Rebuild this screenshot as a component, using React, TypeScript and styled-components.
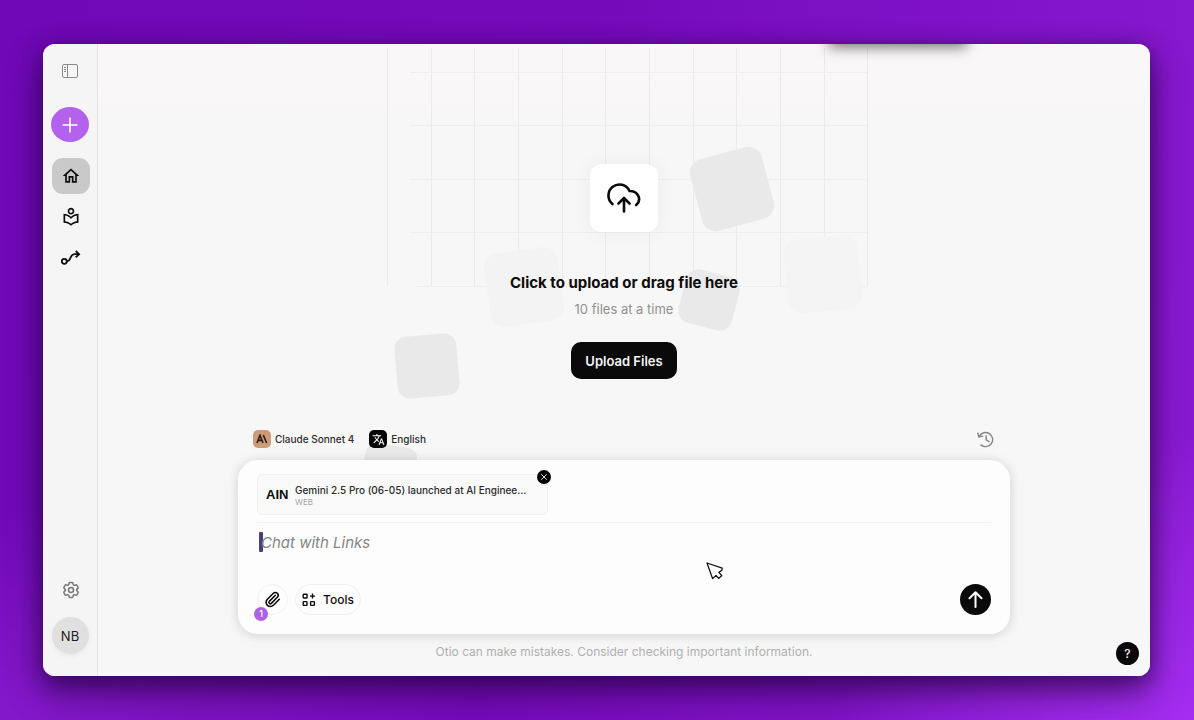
import React from "react";
import styled, { createGlobalStyle } from "styled-components";
import { Paperclip, X } from "lucide-react";
import { MdOutlineHome, MdOutlineLocalLibrary, MdTranslate } from "react-icons/md";
import { HiOutlineCog6Tooth } from "react-icons/hi2";

const GlobalStyle = createGlobalStyle`
  *, *::before, *::after { box-sizing: border-box; }
  body { margin: 0; font-family: Inter, "Liberation Sans", sans-serif; color: #0c0c0c; }
  button, input { font: inherit; color: inherit; }
  button { cursor: pointer; border: 0; padding: 0; background: none; }
  svg { display: block; flex: none; }
`;

const Desktop = styled.div`
  min-height: 100vh;
  display: flex;
  padding: 44px 44px 44px 43px;
  background:
    radial-gradient(ellipse 30% 40% at 100% 100%, #a42df0 0%, rgba(150, 35, 225, 0) 100%),
    radial-gradient(ellipse 40% 30% at 0% 100%, #8419cb 0%, rgba(120, 20, 190, 0) 100%),
    linear-gradient(100deg, #6f08b6 0%, #750abb 45%, #8a1bd2 100%);
`;

const Window = styled.div`
  flex: 1;
  display: flex;
  min-width: 0;
  overflow: hidden;
  border-radius: 12px;
  background: #f7f7f7;
`;

const WindowShadow = styled.div`
  flex: 1;
  display: flex;
  min-width: 0;
  border-radius: 12px;
  box-shadow: 0 16px 32px rgba(30, 0, 50, 0.62), 0 2px 20px rgba(40, 0, 80, 0.45);
`;

const Sidebar = styled.nav`
  flex: none;
  width: 55px;
  display: flex;
  flex-direction: column;
  align-items: center;
  padding: 17px 0 22px;
  background: #f5f5f5;
  border-right: 1px solid #e4e4e4;
`;

const SideButton = styled.button<{ $active?: boolean }>`
  width: 38px;
  height: 36px;
  margin: 0 0 5px 2px;
  display: grid;
  place-items: center;
  border-radius: 11px;
  background: ${(p) => (p.$active ? "#c9c9c9" : "transparent")};
`;

const PanelToggle = styled.button`
  width: 38px;
  height: 20px;
  display: grid;
  place-items: center;
  color: #8b8b8b;
`;

const NewButton = styled.button`
  width: 38px;
  height: 35px;
  margin: 26px 0 16px;
  display: grid;
  place-items: center;
  border-radius: 50%;
  background: #b362ee;
  color: #fff;
`;

const SidebarFoot = styled.div`
  margin-top: auto;
  display: flex;
  flex-direction: column;
  align-items: center;
  gap: 4px;
  color: #777;
`;

const Avatar = styled.button`
  width: 37px;
  height: 37px;
  border-radius: 50%;
  background: #e0e0e0;
  color: #1c1c1c;
  font-size: 13px;
  box-shadow: 0 2px 6px rgba(0, 0, 0, 0.05);
`;

const Main = styled.main`
  position: relative;
  isolation: isolate;
  flex: 1;
  min-width: 0;
  display: flex;
  flex-direction: column;
  align-items: center;
  padding: 0 16px 15px;
  background: linear-gradient(#faf7f8 0, #f7f7f7 120px);
`;

const Backdrop = styled.svg`
  position: absolute;
  z-index: -1;
  top: 0;
  left: 50%;
  width: 780px;
  height: 430px;
  transform: translateX(-50%);
  overflow: visible;
`;

const Dropzone = styled.section`
  display: flex;
  flex-direction: column;
  align-items: center;
  padding-top: 120px;
`;

const UploadTile = styled.div`
  width: 68px;
  height: 68px;
  display: grid;
  place-items: center;
  border-radius: 12px;
  background: #fff;
  box-shadow: 0 0 16px 4px rgba(0, 0, 0, 0.035);
`;

const DropTitle = styled.h1`
  margin: 40px 0 0;
  font-size: 15px;
  line-height: 22px;
  font-weight: 700;
`;

const DropHint = styled.p`
  margin: 5px 0 0;
  font-size: 13px;
  line-height: 20px;
  color: #909090;
`;

const UploadButton = styled.button`
  height: 37px;
  margin-top: 23px;
  padding: 0 14px;
  border-radius: 10px;
  background: #0a0a0a;
  color: #f5f5f5;
  font-size: 13px;
  font-weight: 600;
`;

const Composer = styled.section`
  width: 100%;
  max-width: 772px;
  margin-top: auto;
`;

const Options = styled.div`
  display: flex;
  align-items: center;
  gap: 15px;
  padding: 0 16px 12px 15px;
`;

const Option = styled.button`
  display: flex;
  align-items: center;
  gap: 4px;
  font-size: 10px;
  line-height: 18px;
  font-weight: 500;
  color: #2c2c2c;
`;

const OptionBadge = styled.span<{ $tone: string; $ink: string }>`
  width: 18px;
  height: 18px;
  display: grid;
  place-items: center;
  border-radius: 5px;
  background: ${(p) => p.$tone};
  color: ${(p) => p.$ink};
`;

const HistoryButton = styled.button`
  margin-left: auto;
  color: #858585;
`;

const Card = styled.form`
  display: flex;
  flex-direction: column;
  padding: 14px 19px 19px;
  border-radius: 20px;
  background: #fdfdfd;
  box-shadow: 0 1px 8px 2px rgba(0, 0, 0, 0.09), 0 2px 20px rgba(0, 0, 0, 0.04);
`;

const Attachments = styled.div`
  display: flex;
  padding-bottom: 7px;
  border-bottom: 1px solid #f2f2f2;
`;

const LinkChip = styled.div`
  position: relative;
  width: 291px;
  height: 41px;
  display: flex;
  align-items: center;
  gap: 6px;
  padding: 0 20px 0 8px;
  border: 1px solid #f0f0f0;
  border-radius: 5px;
  background: #f9f9f9;
`;

const SiteMark = styled.span`
  width: 23px;
  font-family: "Liberation Sans", sans-serif;
  font-size: 13px;
  font-weight: 700;
`;

const LinkText = styled.div`
  flex: 1;
  min-width: 0;
`;

const LinkTitle = styled.div`
  font-size: 10px;
  line-height: 14px;
  font-weight: 500;
  color: #2c2c2c;
  white-space: nowrap;
`;

const LinkKind = styled.div`
  font-size: 8px;
  line-height: 10px;
  color: #a5a5a5;
`;

const RemoveButton = styled.button`
  position: absolute;
  top: -5px;
  right: -4px;
  width: 14px;
  height: 14px;
  display: grid;
  place-items: center;
  border-radius: 50%;
  background: #050505;
  color: #fff;
`;

const PromptRow = styled.div`
  display: flex;
  align-items: center;
  padding: 8px 0 0 2px;
`;

const Caret = styled.span`
  flex: none;
  width: 4px;
  height: 20px;
  margin-right: -2px;
  border-radius: 1px;
  background: #4c3f74;
`;

const Prompt = styled.input`
  flex: 1;
  min-width: 0;
  height: 22px;
  padding: 0;
  border: 0;
  outline: 0;
  background: transparent;
  font-size: 15px;
  &::placeholder { color: #868686; opacity: 1; font-style: italic; }
`;

const Actions = styled.div`
  display: flex;
  align-items: center;
  gap: 7px;
  margin-top: 31px;
`;

const PillButton = styled.button<{ $round?: boolean }>`
  position: relative;
  width: ${(p) => (p.$round ? "31px" : "auto")};
  height: 31px;
  display: flex;
  align-items: center;
  justify-content: center;
  gap: 7px;
  padding: ${(p) => (p.$round ? "0" : "0 6px")};
  border: 1px solid #f0f0f0;
  border-radius: 16px;
  background: #fdfdfd;
  font-size: 12px;
  font-weight: 500;
`;

const Count = styled.span`
  position: absolute;
  left: -4px;
  bottom: -7px;
  width: 14px;
  height: 14px;
  border-radius: 50%;
  background: #ad62e6;
  color: #fff;
  font-size: 9px;
  line-height: 14px;
  text-align: center;
`;

const SendButton = styled.button`
  width: 31px;
  height: 31px;
  margin-left: auto;
  display: grid;
  place-items: center;
  border-radius: 50%;
  background: #0a0a0a;
  color: #fff;
`;

const Disclaimer = styled.p`
  margin: 9px 0 0;
  font-size: 12px;
  line-height: 18px;
  color: #b0b0b0;
  text-align: center;
`;

const HelpButton = styled.button`
  position: absolute;
  right: 11px;
  bottom: 11px;
  width: 23px;
  height: 23px;
  border-radius: 50%;
  background: #080808;
  color: #f2f2f2;
  font-size: 12px;
  font-weight: 500;
`;

const Pointer = styled.svg`
  position: absolute;
  left: 608px;
  top: 518px;
`;

const TopShadow = styled.div`
  position: absolute;
  top: -20px;
  left: 734px;
  width: 132px;
  height: 20px;
  box-shadow: 0 0 14px 3px rgba(0, 0, 0, 0.55);
`;

const columns = [0, 44, 87, 131, 175, 218, 262, 306, 349, 393, 437, 480];
const rows = [28, 81, 135, 188, 242];

const tiles = [
  { x: 346, y: 145, size: 74, angle: -15, radius: 14, fill: "#e9e9e9" },
  { x: 323, y: 256, size: 55, angle: 15, radius: 13, fill: "#e9e9e9" },
  { x: 138, y: 243, size: 74, angle: -8, radius: 14, fill: "#f3f3f3" },
  { x: 437, y: 230, size: 74, angle: -6, radius: 14, fill: "#f4f4f4" },
  { x: 41, y: 322, size: 62, angle: -5, radius: 12, fill: "#e9e9e9" },
  { x: 3, y: 427, size: 52, angle: 9, radius: 11, fill: "#e9e9e9" },
];

function BackdropArt() {
  return (
    <Backdrop viewBox="0 0 780 430" aria-hidden="true">
      <g transform="translate(152 0)">
        <g fill="none">
          {columns.map((x) => (
            <path key={x} d={`M${x + 1}.5 4V242`} stroke="#ebebeb" />
          ))}
          {rows.map((y, i) => (
            <path key={y} d={`M${i === 4 ? 30 : 24} ${y}.5H481`} stroke="#eeeeee" />
          ))}
        </g>
        {tiles.map((t) => (
          <rect
            key={`${t.x}-${t.y}`}
            x={t.x - t.size / 2}
            y={t.y - t.size / 2}
            width={t.size}
            height={t.size}
            rx={t.radius}
            fill={t.fill}
            transform={`rotate(${t.angle} ${t.x} ${t.y})`}
          />
        ))}
      </g>
    </Backdrop>
  );
}

export default function App() {
  return (
    <>
      <GlobalStyle />
      <Desktop>
        <WindowShadow>
          <Window>
            <Sidebar aria-label="Main">
              <PanelToggle aria-label="Toggle sidebar">
                <svg width="16" height="14" viewBox="0 0 16 14" fill="none" stroke="currentColor">
                  <rect x="0.5" y="0.5" width="15" height="13" rx="1.5" />
                  <path d="M5.5 1v12M2 3.5h2M2 5.5h2M2 7.5h2" />
                </svg>
              </PanelToggle>
              <NewButton aria-label="New">
                <svg width="16" height="16" viewBox="0 0 16 16" stroke="currentColor" strokeWidth="1.6">
                  <path d="M8 0.5v15M0.5 8h15" />
                </svg>
              </NewButton>
              <SideButton $active aria-label="Home">
                <MdOutlineHome size={20} />
              </SideButton>
              <SideButton aria-label="Library">
                <MdOutlineLocalLibrary size={20} />
              </SideButton>
              <SideButton aria-label="Workflows">
                <svg width="20" height="16" viewBox="0 0 20 16" fill="none" stroke="currentColor" strokeWidth="1.8">
                  <circle cx="3.3" cy="11.3" r="2.5" />
                  <path d="M5.8 11.3C11 11.3 8 4.2 13.5 4.2H17.5M14.7 1l3.4 3.2-3.4 3.2" />
                </svg>
              </SideButton>
              <SidebarFoot>
                <SideButton aria-label="Settings">
                  <HiOutlineCog6Tooth size={20} strokeWidth={1.8} />
                </SideButton>
                <Avatar>NB</Avatar>
              </SidebarFoot>
            </Sidebar>

            <Main>
              <BackdropArt />
              <TopShadow />
              <Dropzone>
                <UploadTile>
                  <svg width="34" height="30" viewBox="0 0 34 30" fill="none" stroke="#0a0a0a" strokeWidth="2.6" strokeLinecap="round" strokeLinejoin="round">
                    <path d="M5.5 21A11 11 0 1 1 22.5 8C31.5 8 35 17 29.2 22" />
                    <path d="M17 28.5V15M11.4 20.6L17 15l5.6 5.6" />
                  </svg>
                </UploadTile>
                <DropTitle>Click to upload or drag file here</DropTitle>
                <DropHint>10 files at a time</DropHint>
                <UploadButton type="button">Upload Files</UploadButton>
              </Dropzone>

              <Composer>
                <Options>
                  <Option type="button">
                    <OptionBadge $tone="#cc9b7a" $ink="#2d1d14">
                      <svg width="12" height="10" viewBox="0 0 12 10" fill="none" stroke="currentColor" strokeWidth="1.6">
                        <path d="M1 9L4 1.2 7 9M2.3 6.4h3.4M7.3 1L10.6 9" />
                      </svg>
                    </OptionBadge>
                    Claude Sonnet 4
                  </Option>
                  <Option type="button">
                    <OptionBadge $tone="#050505" $ink="#fff">
                      <MdTranslate size={13} />
                    </OptionBadge>
                    English
                  </Option>
                  <HistoryButton type="button" aria-label="History">
                    <svg width="17" height="17" viewBox="0 0 24 24" fill="none" stroke="currentColor" strokeWidth="2" strokeLinecap="round" strokeLinejoin="round">
                      <path d="M3.2 7.5A10 10 0 1 1 5.5 19.6M1.2 3.2L2.6 8.6 8 7.2M13 6.5V12.4l4 2.6" />
                    </svg>
                  </HistoryButton>
                </Options>

                <Card onSubmit={(e) => e.preventDefault()}>
                  <Attachments>
                    <LinkChip>
                      <SiteMark>AIN</SiteMark>
                      <LinkText>
                        <LinkTitle>Gemini 2.5 Pro (06-05) launched at AI Enginee...</LinkTitle>
                        <LinkKind>WEB</LinkKind>
                      </LinkText>
                      <RemoveButton type="button" aria-label="Remove link">
                        <X size={10} strokeWidth={2} />
                      </RemoveButton>
                    </LinkChip>
                  </Attachments>
                  <PromptRow>
                    <Caret />
                    <Prompt aria-label="Message" placeholder="Chat with Links" />
                  </PromptRow>
                  <Actions>
                    <PillButton type="button" $round aria-label="Attach">
                      <Paperclip size={17} strokeWidth={2.2} />
                      <Count>1</Count>
                    </PillButton>
                    <PillButton type="button">
                      <svg width="14" height="14" viewBox="0 0 14 14" fill="none" stroke="currentColor" strokeWidth="1.4">
                        <rect x="1.2" y="1.2" width="3.8" height="3.8" rx="0.6" />
                        <rect x="1.2" y="8.6" width="3.8" height="3.8" rx="0.6" />
                        <rect x="8.6" y="8.6" width="3.8" height="3.8" rx="0.6" />
                        <path d="M10.5 0.6v5M8 3.1h5" />
                      </svg>
                      Tools
                    </PillButton>
                    <SendButton type="submit" aria-label="Send">
                      <svg width="17" height="17" viewBox="0 0 17 17" fill="none" stroke="currentColor" strokeWidth="2" strokeLinecap="round" strokeLinejoin="round">
                        <path d="M8.5 16V1.5M2.5 7.3l6-6 6 6" />
                      </svg>
                    </SendButton>
                  </Actions>
                </Card>
                <Disclaimer>Otio can make mistakes. Consider checking important information.</Disclaimer>
              </Composer>

              <HelpButton type="button" aria-label="Help">?</HelpButton>
              <Pointer width="18" height="18" viewBox="0 0 18 18" fill="#fff" stroke="#111" strokeWidth="1.3" strokeLinejoin="round" aria-hidden="true">
                <path d="M1 1L16.2 6.2L15.8 8.4L12.8 10.2L15.8 13.6L12.6 16.4L10 13.4L6.6 16.6Z" />
              </Pointer>
            </Main>
          </Window>
        </WindowShadow>
      </Desktop>
    </>
  );
}
